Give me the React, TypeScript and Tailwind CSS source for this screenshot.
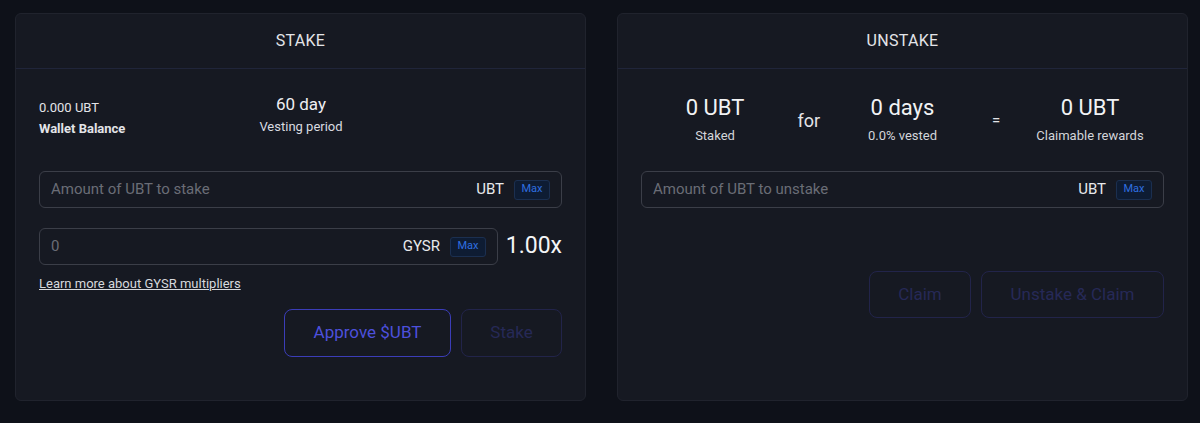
import React from 'react';

function AmountInput({ placeholder, unit, className = '' }: { placeholder: string; unit: string; className?: string }) {
  return (
    <div className={`flex items-center h-[37px] rounded-md border border-[#3b3e48] pl-[11px] pr-[11px] ${className}`}>
      <input
        placeholder={placeholder}
        className="flex-1 min-w-0 bg-transparent outline-none text-[15px] text-white placeholder:text-[#6a6d76]"
      />
      <span className="text-[15px] text-[#e8e9ec] mr-[10px]">{unit}</span>
      <span className="flex items-center justify-center w-[36px] h-[20px] rounded-[3px] bg-[#0e1c33] border border-[#1b2f50] text-[11px] text-[#2f6fe0]">
        Max
      </span>
    </div>
  );
}

function Card({ title, children }: { title: string; children: React.ReactNode }) {
  return (
    <div className="w-[571px] shrink-0 h-[388px] rounded-[6px] bg-[#161922] border border-[#20232d] flex flex-col">
      <div className="h-[55px] flex items-center justify-center border-b border-[#20253a] text-[16px] tracking-[0.3px] text-[#e3e4e8]">
        {title}
      </div>
      {children}
    </div>
  );
}

function Stat({ value, label }: { value: string; label: string }) {
  return (
    <div className="flex flex-col items-center w-[150px]">
      <span className="text-[22px] leading-[26px] text-[#f1f2f4]">{value}</span>
      <span className="text-[13px] leading-[16px] mt-[7px] text-[#d3d5da]">{label}</span>
    </div>
  );
}

export default function App() {
  return (
    <div
      className="w-[1200px] h-[423px] bg-[#0e1119] flex gap-[31px] pl-[15px] pt-[13px]"
      style={{ fontFamily: 'Roboto, "Liberation Sans", sans-serif' }}
    >
      <Card title="STAKE">
        <div className="px-[23px] pt-[25px]">
          <div className="flex items-start">
            <div className="w-[162px] pt-[6px] flex flex-col">
              <span className="text-[13px] leading-[16px] text-[#e3e4e8]">0.000 UBT</span>
              <span className="text-[13px] leading-[16px] mt-[5px] font-bold text-[#e3e4e8]">Wallet Balance</span>
            </div>
            <div className="w-[200px] flex flex-col items-center">
              <span className="text-[17px] leading-[20px] text-[#eeeff2]">60 day</span>
              <span className="text-[13px] leading-[16px] mt-[5px] text-[#d9dbe0]">Vesting period</span>
            </div>
          </div>
          <AmountInput placeholder="Amount of UBT to stake" unit="UBT" className="mt-[34px]" />
          <div className="flex items-center mt-[20px]">
            <AmountInput placeholder="0" unit="GYSR" className="w-[459px]" />
            <span className="ml-auto text-[23px] text-[#f3f4f6]">1.00x</span>
          </div>
          <a href="#" className="block mt-[11px] text-[13px] leading-[16px] text-[#d6d8dd] underline">
            Learn more about GYSR multipliers
          </a>
          <div className="flex justify-end gap-[10px] mt-[17px]">
            <button className="w-[167px] h-[48px] rounded-[8px] border border-[#3b3db8] text-[17px] text-[#4d50dc]">
              Approve $UBT
            </button>
            <button className="w-[101px] h-[48px] rounded-[8px] border border-[#22244a] text-[17px] text-[#262957]">
              Stake
            </button>
          </div>
        </div>
      </Card>
      <Card title="UNSTAKE">
        <div className="px-[23px] pt-[26px]">
          <div className="flex items-center justify-center">
            <Stat value="0 UBT" label="Staked" />
            <span className="w-[40px] text-center text-[18px] text-[#e3e4e8] mt-[2px]">for</span>
            <Stat value="0 days" label="0.0% vested" />
            <span className="w-[40px] text-center text-[15px] text-[#e3e4e8] mt-[2px]">=</span>
            <Stat value="0 UBT" label="Claimable rewards" />
          </div>
          <AmountInput placeholder="Amount of UBT to unstake" unit="UBT" className="mt-[27px]" />
          <div className="flex justify-end gap-[10px] mt-[63px]">
            <button className="w-[102px] h-[47px] rounded-[8px] border border-[#22244a] text-[17px] text-[#262957]">
              Claim
            </button>
            <button className="w-[183px] h-[47px] rounded-[8px] border border-[#22244a] text-[17px] text-[#262957]">
              Unstake &amp; Claim
            </button>
          </div>
        </div>
      </Card>
    </div>
  );
}
